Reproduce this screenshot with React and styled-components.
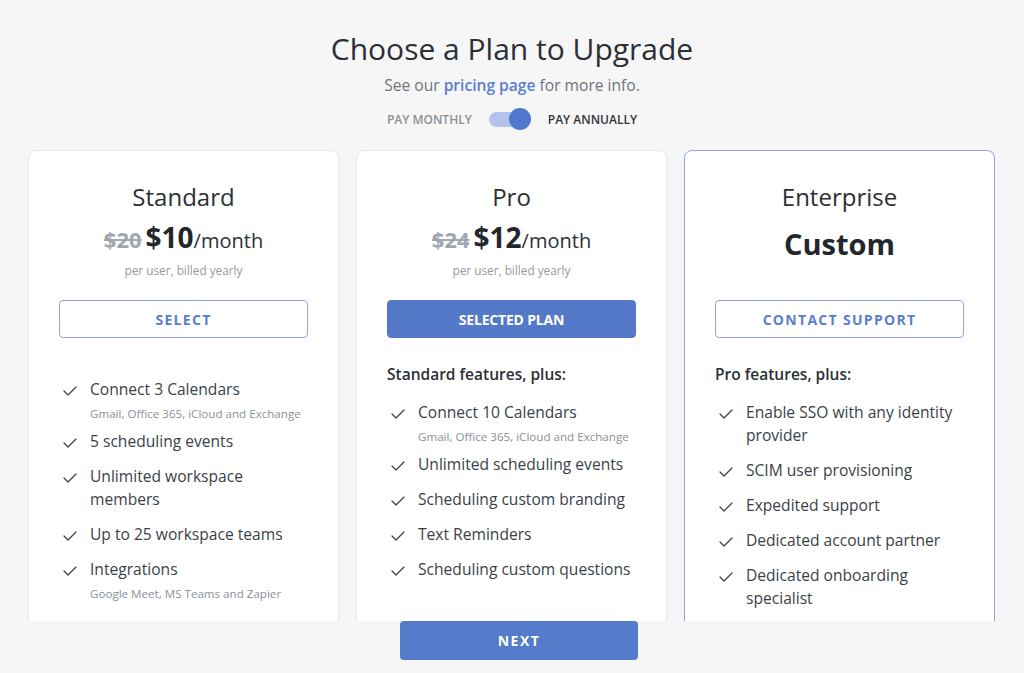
import React from 'react';
import styled, { createGlobalStyle } from 'styled-components';

const GlobalStyle = createGlobalStyle`
  html, body {
    margin: 0;
    padding: 0;
    background: #f6f6f6;
    font-family: 'Open Sans', 'Noto Sans', sans-serif;
    color: #2c3038;
  }
  * { box-sizing: border-box; }
`;

const Page = styled.div`
  height: 100vh;
  display: flex;
  flex-direction: column;
`;

const Main = styled.div`
  flex: 1;
  overflow: hidden;
  padding-top: 29px;
`;

const Header = styled.div`
  display: flex;
  flex-direction: column;
  align-items: center;
`;

const Title = styled.h1`
  margin: 0;
  font-size: 30px;
  line-height: 40px;
  font-weight: 500;
  color: #2b2f36;
`;

const Subtitle = styled.p`
  margin: 4px 0 0;
  font-size: 15.6px;
  line-height: 24px;
  color: #6f747c;
  a {
    color: #5a7ed0;
    font-weight: 600;
    text-decoration: none;
  }
`;

const ToggleRow = styled.div`
  margin-top: 10px;
  height: 24px;
  display: flex;
  align-items: center;
  gap: 17px;
`;

const ToggleLabel = styled.span`
  font-size: 12px;
  font-weight: 600;
  color: ${(p) => (p.active ? '#30343b' : '#8c9096')};
`;

const Track = styled.div`
  position: relative;
  width: 42px;
  height: 15px;
  border-radius: 8px;
  background: #b3c4ec;
`;

const Knob = styled.div`
  position: absolute;
  right: 0;
  top: 50%;
  transform: translateY(-50%);
  width: 22px;
  height: 22px;
  border-radius: 50%;
  background: #5078cd;
`;

const Cards = styled.div`
  margin-top: 19px;
  padding-left: 28px;
  display: grid;
  grid-template-columns: repeat(3, 311px);
  gap: 17px;
  align-items: start;
`;

const Card = styled.div`
  background: #fff;
  border: 1px solid ${(p) => (p.highlight ? '#8ea8de' : '#e6e7eb')};
  border-radius: 8px;
  padding: 31px 30px 40px;
  min-height: 520px;
`;

const PlanName = styled.h2`
  margin: 0;
  text-align: center;
  font-size: 24px;
  line-height: 30px;
  font-weight: 400;
  color: #2b2f36;
`;

const PriceArea = styled.div`
  margin-top: 7px;
  height: 56px;
  display: flex;
  flex-direction: column;
  align-items: center;
`;

const PriceLine = styled.div`
  display: flex;
  align-items: baseline;
  line-height: 36px;
  gap: 4px;
`;

const OldPrice = styled.span`
  font-size: 22px;
  font-weight: 700;
  color: #a2a6ad;
  text-decoration: line-through;
`;

const Price = styled.span`
  font-size: 28px;
  font-weight: 700;
  color: #22262d;
  span {
    font-size: 20px;
    font-weight: 400;
    color: #2c3038;
  }
`;

const Custom = styled.div`
  margin-top: 5px;
  font-size: 29px;
  line-height: 40px;
  font-weight: 700;
  color: #22262d;
`;

const Billing = styled.div`
  margin-top: 2px;
  font-size: 11.8px;
  line-height: 18px;
  color: #959aa1;
`;

const PlanButton = styled.button`
  display: block;
  width: 100%;
  margin-top: 25px;
  height: 38px;
  border-radius: 4px;
  font-family: inherit;
  font-size: 14px;
  font-weight: 700;
  letter-spacing: ${(p) => (p.filled ? '-0.2px' : '1.3px')};
  cursor: pointer;
  border: 1px solid ${(p) => (p.filled ? '#5579c9' : '#8ea8de')};
  background: ${(p) => (p.filled ? '#5579c9' : '#fff')};
  color: ${(p) => (p.filled ? '#fff' : '#5a7ed0')};
`;

const Features = styled.div`
  margin-top: ${(p) => (p.withHeading ? '25px' : '40px')};
`;

const FeatureHeading = styled.div`
  font-size: 15.5px;
  line-height: 22px;
  font-weight: 600;
  color: #2b2f36;
  margin-bottom: 16px;
`;

const List = styled.ul`
  list-style: none;
  margin: 0;
  padding: 0;
  display: flex;
  flex-direction: column;
  gap: 12px;
`;

const Item = styled.li`
  display: grid;
  grid-template-columns: 31px 1fr;
  align-items: start;
`;

const CheckBox = styled.span`
  display: flex;
  align-items: center;
  height: 23px;
  padding-left: 3px;
  padding-top: 3px;
  color: #3a3f47;
`;

const ItemText = styled.div`
  font-size: 15.6px;
  line-height: 23px;
  color: #3a3f47;
`;

const ItemSub = styled.div`
  margin-top: 5px;
  margin-bottom: -4px;
  font-size: 11.6px;
  line-height: 16px;
  color: #8a8f98;
  white-space: nowrap;
`;

const Footer = styled.div`
  height: 52px;
  flex-shrink: 0;
  display: flex;
  justify-content: center;
  align-items: flex-start;
`;

const NextButton = styled.button`
  width: 238px;
  height: 39px;
  margin-left: 14px;
  border: none;
  border-radius: 4px;
  background: #557bcb;
  color: #fff;
  font-family: inherit;
  font-size: 14px;
  font-weight: 700;
  letter-spacing: 1.5px;
  cursor: pointer;
`;

const Check = () => (
  <svg width="16" height="16" viewBox="0 0 24 24" fill="none" stroke="currentColor" strokeWidth="1.8" strokeLinecap="round" strokeLinejoin="round">
    <path d="M21 6 9 18l-6-6" />
  </svg>
);

const plans = [
  {
    name: 'Standard',
    old: '$20',
    price: '$10',
    button: 'SELECT',
    features: [
      { text: 'Connect 3 Calendars', sub: 'Gmail, Office 365, iCloud and Exchange' },
      { text: '5 scheduling events' },
      { text: 'Unlimited workspace members' },
      { text: 'Up to 25 workspace teams' },
      { text: 'Integrations', sub: 'Google Meet, MS Teams and Zapier' },
    ],
  },
  {
    name: 'Pro',
    old: '$24',
    price: '$12',
    button: 'SELECTED PLAN',
    filled: true,
    heading: 'Standard features, plus:',
    features: [
      { text: 'Connect 10 Calendars', sub: 'Gmail, Office 365, iCloud and Exchange' },
      { text: 'Unlimited scheduling events' },
      { text: 'Scheduling custom branding' },
      { text: 'Text Reminders' },
      { text: 'Scheduling custom questions' },
    ],
  },
  {
    name: 'Enterprise',
    custom: true,
    highlight: true,
    button: 'CONTACT SUPPORT',
    heading: 'Pro features, plus:',
    features: [
      { text: 'Enable SSO with any identity provider' },
      { text: 'SCIM user provisioning' },
      { text: 'Expedited support' },
      { text: 'Dedicated account partner' },
      { text: 'Dedicated onboarding specialist' },
    ],
  },
];

const App = () => {
  return (
    <Page>
      <GlobalStyle />
      <Main>
        <Header>
          <Title>Choose a Plan to Upgrade</Title>
          <Subtitle>
            See our <a href="#pricing">pricing page</a> for more info.
          </Subtitle>
          <ToggleRow>
            <ToggleLabel>PAY MONTHLY</ToggleLabel>
            <Track>
              <Knob />
            </Track>
            <ToggleLabel active>PAY ANNUALLY</ToggleLabel>
          </ToggleRow>
        </Header>
        <Cards>
          {plans.map((plan) => (
            <Card key={plan.name} highlight={plan.highlight}>
              <PlanName>{plan.name}</PlanName>
              <PriceArea>
                {plan.custom ? (
                  <Custom>Custom</Custom>
                ) : (
                  <>
                    <PriceLine>
                      <OldPrice>{plan.old}</OldPrice>
                      <Price>
                        {plan.price}
                        <span>/month</span>
                      </Price>
                    </PriceLine>
                    <Billing>per user, billed yearly</Billing>
                  </>
                )}
              </PriceArea>
              <PlanButton filled={plan.filled}>{plan.button}</PlanButton>
              <Features withHeading={!!plan.heading}>
                {plan.heading && <FeatureHeading>{plan.heading}</FeatureHeading>}
                <List>
                  {plan.features.map((f) => (
                    <Item key={f.text}>
                      <CheckBox>
                        <Check />
                      </CheckBox>
                      <div>
                        <ItemText>{f.text}</ItemText>
                        {f.sub && <ItemSub>{f.sub}</ItemSub>}
                      </div>
                    </Item>
                  ))}
                </List>
              </Features>
            </Card>
          ))}
        </Cards>
      </Main>
      <Footer>
        <NextButton>NEXT</NextButton>
      </Footer>
    </Page>
  );
};

export default App;
